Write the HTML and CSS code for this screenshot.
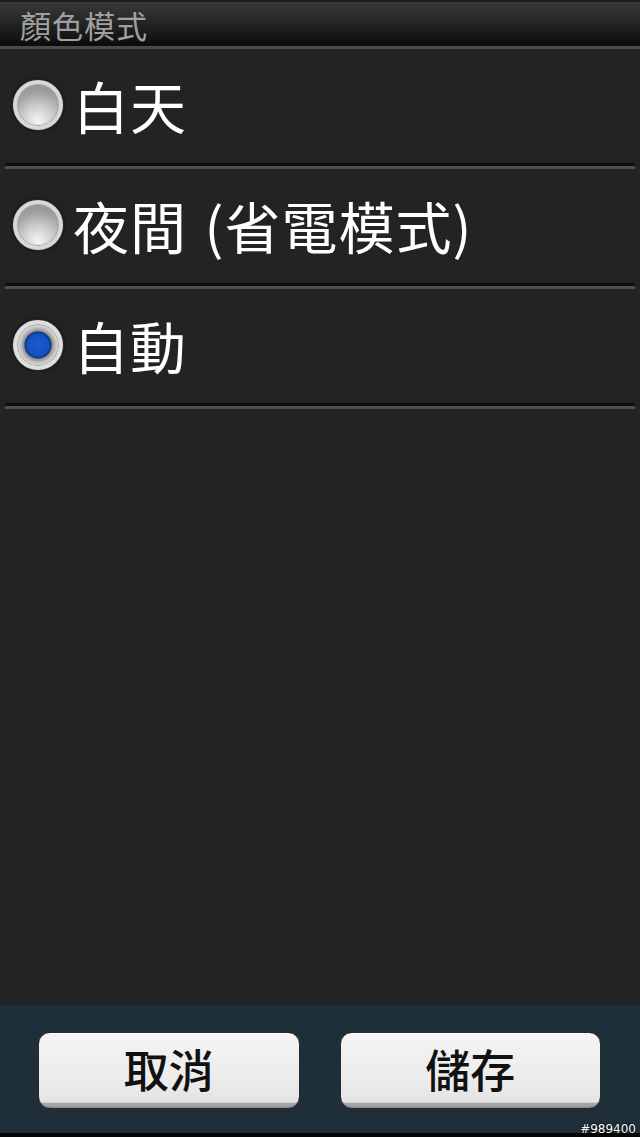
FILE: index.html
```html
<!DOCTYPE html>
<html lang="zh-Hant">
<head>
<meta charset="utf-8">
<title>顏色模式</title>
<link rel="stylesheet" href="styles.css">
</head>
<body>
<div class="screen">
  <header class="titlebar">
    <h1 class="title">顏色模式</h1>
  </header>
  <div class="sep sep-full"></div>
  <ul class="options">
    <li class="option">
      <span class="radio"></span>
      <span class="label">白天</span>
    </li>
    <li class="sep"></li>
    <li class="option">
      <span class="radio"></span>
      <span class="label">夜間 (省電模式)</span>
    </li>
    <li class="sep"></li>
    <li class="option">
      <span class="radio radio-on"></span>
      <span class="label">自動</span>
    </li>
    <li class="sep"></li>
  </ul>
  <div class="spacer"></div>
  <footer class="actions">
    <button class="btn">取消</button>
    <button class="btn">儲存</button>
  </footer>
  <div class="bottom-strip"></div>
  <span class="watermark">#989400</span>
</div>
</body>
</html>
```
FILE: styles.css
```css
html, body {
  margin: 0;
  padding: 0;
  background: #000;
}
body {
  font-family: "Noto Sans CJK TC", "Noto Sans", sans-serif;
}
.screen {
  position: relative;
  width: 640px;
  height: 1137px;
  display: flex;
  flex-direction: column;
  background: #232323;
  overflow: hidden;
}
.titlebar {
  height: 43px;
  box-sizing: border-box;
  border-top: 2px solid #1b1b1b;
  background: linear-gradient(to bottom, #383a3a 0%, #262828 45%, #0e0e0e 100%);
  display: flex;
  align-items: center;
  padding: 3px 0 0 20px;
}
.title {
  margin: 0;
  font-size: 31px;
  font-weight: 400;
  color: #a0a0a0;
  line-height: 1;
  letter-spacing: 1px;
}
.sep {
  list-style: none;
  height: 3px;
  border-top: 3px solid #0c0c0c;
  background: #4e5050;
  margin: 0 5px;
}
.sep-full {
  margin: 0;
  background: #4a4c4c;
}
.options {
  list-style: none;
  margin: 0;
  padding: 0;
}
.option {
  height: 114px;
  display: flex;
  align-items: center;
  padding-left: 13px;
  gap: 10px;
  box-sizing: border-box;
  padding-bottom: 2px;
}
.radio {
  width: 42px;
  height: 42px;
  border-radius: 50%;
  border: 4px solid #d8d8d8;
  box-shadow: 0 0 0 1px #2c2c2c, 0 0 3px 1px rgba(0,0,0,0.6), inset 0 0 0 1px #a8a8a8;
  background: radial-gradient(circle at 50% 88%, #f6f6f6 0%, #cacaca 38%, #9e9e9e 70%, #8c8c8c 100%);
  flex: none;
}
.radio-on {
  background: radial-gradient(circle at 50% 50%, #1d5bd0 0, #1550c0 11px, #0c3278 13px, #8c8c8c 14px, #bdbdbd 17px, #e2e2e2 21px);
  border-color: #dedede;
}
.label {
  font-size: 56px;
  color: #ffffff;
  line-height: 1;
  letter-spacing: 1px;
  word-spacing: 4px;
}
.spacer {
  flex: 1;
}
.actions {
  height: 128px;
  box-sizing: border-box;
  background: #1f2f3a;
  display: flex;
  padding: 27px 39px 24px 38px;
  gap: 40px;
}
.btn {
  flex: 1;
  height: 77px;
  border-radius: 12px;
  border: 1px solid #2a2a2a;
  background: linear-gradient(to bottom, #f4f4f4 0%, #ececec 60%, #e4e4e4 92%, #a9a9a9 94%, #9a9a9a 100%);
  box-shadow: inset 0 1px 0 #ffffff, inset 0 -1px 0 #8a8a8a;
  font-family: "Noto Sans CJK TC", "Noto Sans", sans-serif;
  font-size: 45px;
  font-weight: 500;
  color: #111;
  line-height: 1;
  padding: 0 0 4px 0;
  display: flex;
  align-items: center;
  justify-content: center;
}
.bottom-strip {
  height: 4px;
  background: #050505;
}
.watermark {
  position: absolute;
  right: 4px;
  bottom: 2px;
  font-family: "DejaVu Sans", sans-serif;
  font-size: 12px;
  color: #ffffff;
  line-height: 1;
  text-shadow: 0 0 2px #000, 0 0 2px #000;
}
```
